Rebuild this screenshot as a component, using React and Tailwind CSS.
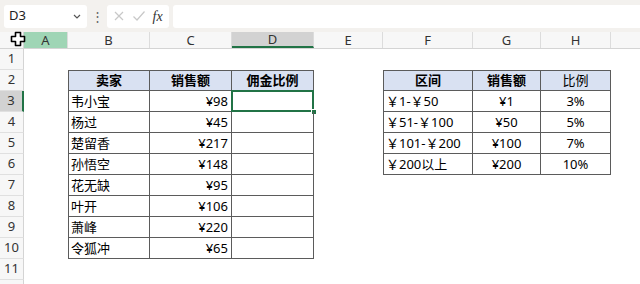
import React from "react";

const cols = [
  { k: "A", w: "w-[44px]" },
  { k: "B", w: "w-[82px]" },
  { k: "C", w: "w-[82px]" },
  { k: "D", w: "w-[82px]" },
  { k: "E", w: "w-[69px]" },
  { k: "F", w: "w-[90px]" },
  { k: "G", w: "w-[68px]" },
  { k: "H", w: "w-[70px]" },
  { k: "I", w: "w-[70px]" },
];

const t1 = [
  ["卖家", "销售额", "佣金比例"],
  ["韦小宝", "¥98", ""],
  ["杨过", "¥45", ""],
  ["楚留香", "¥217", ""],
  ["孙悟空", "¥148", ""],
  ["花无缺", "¥95", ""],
  ["叶开", "¥106", ""],
  ["萧峰", "¥220", ""],
  ["令狐冲", "¥65", ""],
];

const t2 = [
  ["区间", "销售额", "比例"],
  ["￥1-￥50", "¥1", "3%"],
  ["￥51-￥100", "¥50", "5%"],
  ["￥101-￥200", "¥100", "7%"],
  ["￥200以上", "¥200", "10%"],
];

function cellInfo(r, c) {
  const b = ["B", "C", "D"].indexOf(c);
  if (b >= 0 && r >= 2 && r <= 10) {
    return { text: t1[r - 2][b], head: r === 2, bold: true, first: b === 0, align: b === 0 ? "left" : b === 1 ? "right" : "center" };
  }
  const f = ["F", "G", "H"].indexOf(c);
  if (f >= 0 && r >= 2 && r <= 6) {
    return { text: t2[r - 2][f], head: r === 2, bold: f !== 2, first: f === 0, align: f === 0 ? "left" : "center" };
  }
  return null;
}

function Cell({ r, c }) {
  const info = cellInfo(r, c.k);
  const selected = r === 3 && c.k === "D";
  let cls = `${c.w} h-full shrink-0 relative flex items-center`;
  if (info) {
    cls += " border-r border-b border-[#5b5b5b]";
    if (info.first) cls += " border-l";
    if (info.head) cls += " border-t bg-[#d9e1f2] justify-center";
    if (info.head && info.bold) cls += " font-bold";
    if (info.head) cls += "";
    else if (info.align === "right") cls += " justify-end pr-[3px]";
    else if (info.align === "center") cls += " justify-center";
    else cls += " pl-[2px]";
  }
  return (
    <div className={cls}>
      {info ? <span className="leading-none">{info.text}</span> : null}
      {selected ? (
        <>
          <div className="absolute -left-px -top-px -right-px -bottom-px border-2 border-[#217346]" />
          <div className="absolute -right-[4px] -bottom-[4px] w-[6px] h-[6px] bg-[#217346] border border-white" />
        </>
      ) : null}
    </div>
  );
}

function Corner() {
  return (
    <svg width="16" height="16" viewBox="0 0 16 16" className="absolute left-[10px] top-[31px] z-10">
      <path
        d="M5.5 1.5h5v4h4v5h-4v4h-5v-4h-4v-5h4z"
        fill="#fff"
        stroke="#000"
        strokeWidth="1.6"
        strokeLinejoin="round"
      />
    </svg>
  );
}

export default function App() {
  const rows = [1, 2, 3, 4, 5, 6, 7, 8, 9, 10, 11, 12];
  return (
    <div className="w-[640px] h-[284px] overflow-hidden bg-white relative font-['Noto_Sans','Noto_Sans_CJK_SC',sans-serif] text-[13px] text-black">
      {/* formula bar */}
      <div className="h-[32px] bg-[#f3f1ee] flex items-center pl-[4px] gap-[4px]">
        <div className="w-[83px] h-[23px] bg-white rounded-[3px] flex items-center justify-between px-[5px] text-[13px] text-[#222]">
          <span>D3</span>
          <svg width="10" height="10" viewBox="0 0 10 10">
            <path d="M2 4l3 3 3-3" fill="none" stroke="#555" strokeWidth="1.2" />
          </svg>
        </div>
        <div className="w-[12px] flex justify-center text-[#666] text-[13px] leading-none">⋮</div>
        <div className="w-[62px] h-[23px] bg-white rounded-[3px] flex items-center justify-around px-[3px]">
          <svg width="12" height="12" viewBox="0 0 12 12">
            <path d="M2 2l8 8M10 2l-8 8" stroke="#c8c8c8" strokeWidth="1.2" />
          </svg>
          <svg width="14" height="12" viewBox="0 0 14 12">
            <path d="M1.5 6.5l3.5 3.5 7.5-8.5" fill="none" stroke="#c8c8c8" strokeWidth="1.2" />
          </svg>
          <span className="font-['Liberation_Serif',serif] italic text-[14px] text-[#333]">fx</span>
        </div>
        <div className="flex-1 h-[23px] bg-white rounded-l-[3px]" />
      </div>

      {/* column headers */}
      <div className="h-[17px] flex bg-[#f7f7f7] border-b border-[#d4d4d4] text-[13px] text-[#333]">
        <div className="w-[24px] shrink-0 border-r border-[#d4d4d4]" />
        {cols.map((c) => (
          <div
            key={c.k}
            className={`${c.w} shrink-0 flex items-center justify-center leading-none border-r border-[#dcdcdc] ${
              c.k === "A" ? "bg-[#9fd5b5]" : c.k === "D" ? "bg-[#d2d2d2] border-b-2 border-b-[#217346]" : ""
            }`}
          >
            {c.k === "I" ? "" : c.k}
          </div>
        ))}
      </div>

      {/* rows */}
      {rows.map((r) => (
        <div key={r} className="h-[21px] flex">
          <div
            className={`w-[24px] shrink-0 flex items-center justify-center text-[13px] text-[#333] border-b border-[#e0e0e0] ${
              r === 3 ? "bg-[#d2d2d2] border-r-2 border-r-[#217346]" : "bg-[#f7f7f7] border-r border-r-[#d4d4d4]"
            }`}
          >
            {r < 12 ? r : ""}
          </div>
          {cols.map((c) => (
            <Cell key={c.k} r={r} c={c} />
          ))}
        </div>
      ))}

      <Corner />
    </div>
  );
}
